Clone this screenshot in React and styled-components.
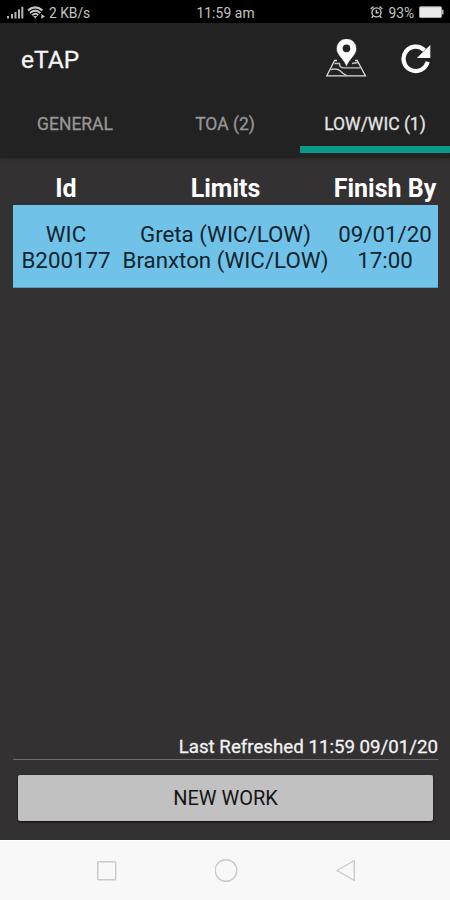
import React from 'react';
import styled, { createGlobalStyle } from 'styled-components';

const GlobalStyle = createGlobalStyle`
  * {
    box-sizing: border-box;
  }
  body {
    margin: 0;
    background: #343132;
    font-family: Roboto, "Liberation Sans", sans-serif;
  }
`;

const Screen = styled.div`
  display: flex;
  flex-direction: column;
  width: 450px;
  height: 900px;
  background: #343132;
  overflow: hidden;
`;

const StatusBar = styled.div`
  display: grid;
  grid-template-columns: 1fr auto 1fr;
  align-items: center;
  height: 23px;
  padding: 2px 6px 0 7px;
  background: #000;
  color: #c4c4c4;
  font-size: 13px;
  line-height: 20px;
  white-space: nowrap;
`;

const StatusGroup = styled.div`
  display: flex;
  align-items: center;
  justify-content: ${(props) => (props.$end ? 'flex-end' : 'flex-start')};
  gap: ${(props) => props.$gap}px;
`;

const StatusText = styled.span`
  font-size: 13.8px;
  letter-spacing: ${(props) => props.$spacing || 0}px;
`;

const Header = styled.header`
  height: 135px;
  background: #222;
  box-shadow: 0 1px 4px rgba(0, 0, 0, 0.25);
`;

const Toolbar = styled.div`
  display: flex;
  align-items: center;
  justify-content: space-between;
  height: 70px;
  padding: 2px 19px 0 21px;
`;

const Title = styled.h1`
  margin: 0;
  padding-top: 1px;
  color: #f5f5f5;
  font-size: 24.5px;
  font-weight: 400;
  line-height: 30px;
  -webkit-text-stroke: 0.3px #f5f5f5;
`;

const Actions = styled.div`
  display: flex;
  align-items: center;
  gap: 34px;
`;

const IconButton = styled.button`
  display: flex;
  padding: 0;
  border: none;
  background: none;
  cursor: pointer;
`;

const Tabs = styled.nav`
  display: grid;
  grid-template-columns: repeat(3, 1fr);
  height: 60px;
`;

const Tab = styled.button`
  padding: 8px 0 0;
  border: none;
  border-bottom: 7px solid ${(props) => (props.$active ? '#0a9888' : 'transparent')};
  background: none;
  color: ${(props) => (props.$active ? '#e4e4e4' : '#979797')};
  font-family: inherit;
  font-size: 17.5px;
  font-weight: 400;
  -webkit-text-stroke: 0.3px currentColor;
  cursor: pointer;
`;

const Content = styled.main`
  display: flex;
  flex: 1;
  flex-direction: column;
  padding: 16px 12px 0 13px;
`;

const Row = styled.div`
  display: grid;
  grid-template-columns: 106px 1fr 106px;
  text-align: center;
  white-space: nowrap;
`;

const HeadRow = styled(Row)`
  height: 31px;
  color: #fff;
  font-size: 25px;
  font-weight: 700;
  line-height: 30px;
`;

const WorkRow = styled(Row)`
  height: 83px;
  padding-top: 16px;
  border: solid #5f9cba;
  border-width: 0 0 1px;
  background: #70c2e9;
  color: #12242c;
  font-size: 22.3px;
  line-height: 26px;
`;

const Cell = styled.div`
  display: flex;
  flex-direction: column;
  align-items: center;
`;

const Refreshed = styled.div`
  height: 26px;
  margin-top: auto;
  border-bottom: 1px solid #6c6a6b;
  color: #f2f2f2;
  font-size: 18.7px;
  line-height: 26px;
  text-align: right;
  -webkit-text-stroke: 0.3px #f2f2f2;
`;

const NewWork = styled.button`
  height: 46px;
  margin: 15px 5px 19px;
  border: none;
  border-radius: 2px;
  background: #c1c1c1;
  box-shadow: 0 1px 2px rgba(0, 0, 0, 0.8);
  color: #151515;
  font-family: inherit;
  font-size: 20px;
  cursor: pointer;
`;

const NavBar = styled.footer`
  display: grid;
  grid-template-columns: 120px 1fr 120px;
  align-items: center;
  justify-items: center;
  height: 60px;
  padding: 0 44px 0 47px;
  border-top: 1px solid #fff;
  background: #f8f8f8;
`;

const NavIcon = styled.svg`
  width: 24px;
  height: 24px;
  fill: none;
  stroke: #c9c9c9;
  stroke-width: 1.4;
`;

const columns = ['Id', 'Limits', 'Finish By'];

const work = [
  ['WIC', 'B200177'],
  ['Greta (WIC/LOW)', 'Branxton (WIC/LOW)'],
  ['09/01/20', '17:00'],
];

const SignalIcon = () => (
  <svg width="17" height="13" viewBox="0 0 17 13" fill="#b4b4b4">
    <rect x="0" y="10" width="2" height="2.5" />
    <rect x="4" y="8" width="2" height="4.5" />
    <rect x="7.5" y="6" width="2" height="6.5" />
    <rect x="11" y="3.4" width="2" height="9.1" />
    <rect x="14.3" y="0.8" width="2" height="11.7" />
  </svg>
);

const WifiIcon = () => (
  <svg width="19" height="13" viewBox="0 0 19 13" fill="none" stroke="#c4c4c4">
    <path d="M1 4.3Q8.2-1.5 15.4 4.3" strokeWidth="2.2" />
    <path d="M3 6.9Q8.2 2.4 13.4 6.9" strokeWidth="2" />
    <path d="M5.2 9.2Q8.2 6.5 11.2 9.2" strokeWidth="1.9" />
    <path d="M6.2 10h4l-2 2.400z" fill="#c4c4c4" stroke="none" />
    <path d="M14.300 8v4.800l3.600-2.400z" fill="#c4c4c4" stroke="none" />
  </svg>
);

const AlarmIcon = () => (
  <svg width="13" height="13" viewBox="0 0 13 13" fill="none" stroke="#c4c4c4" strokeWidth="1.4">
    <circle cx="6.5" cy="6.4" r="4.5" />
    <path d="M6.3 3.700v3.100h2.400M.6 3L3.500.6M12.400 3L9.500.6M3.200 10l-1.600 1.900M9.800 10l1.600 1.900" />
  </svg>
);

const BatteryIcon = () => (
  <svg width="25" height="13" viewBox="0 0 25 13">
    <rect x="0.5" y="0.8" width="22" height="10.700" rx="1" fill="#e9e9e9" stroke="#aaa" />
    <path d="M23 3.800h1.500v4.800H23z" fill="#bbb" />
  </svg>
);

const MapPinIcon = () => (
  <svg width="42" height="40" viewBox="0 0 42 40">
    <path d="M12 21.500H9.600L1.800 36.800h38.600L32.200 21.500H30" fill="none" stroke="#ddd" strokeWidth="1.300" />
    <path
      d="M5.500 30.600q7-1.600 9.500 1.200t6.500 4.500M9.500 24.500h5q0 4.200 4.500 4.400h16.500M27 24.500l6-1"
      fill="none"
      stroke="#c4c4c4"
      strokeWidth="1.400"
    />
    <path
      d="M21.500-.5a10.200 10.200 0 0 0-10.200 10.200c0 6.400 7.200 10 10.200 18.300 3-8.300 10.200-11.900 10.200-18.300A10.200 10.200 0 0 0 21.500-.5z"
      fill="#fff"
      stroke="#222"
      strokeWidth="0.700"
    />
    <circle cx="21.500" cy="9.400" r="3.800" fill="#222" />
  </svg>
);

const RefreshIcon = () => (
  <svg width="30" height="30" viewBox="0 0 30 30">
    <path d="M26.600 17.800A12.200 12.200 0 1 1 23.500 6.300" fill="none" stroke="#fff" strokeWidth="4.300" />
    <path d="M29.300 1v13H15.800z" fill="#fff" />
  </svg>
);

const App = () => {
  return (
    <>
      <GlobalStyle />
      <Screen>
        <StatusBar>
          <StatusGroup $gap={3}>
            <SignalIcon />
            <WifiIcon />
            <StatusText>2 KB/s</StatusText>
          </StatusGroup>
          <StatusText $spacing={0.1}>11:59 am</StatusText>
          <StatusGroup $gap={5} $end>
            <AlarmIcon />
            <StatusText>93%</StatusText>
            <BatteryIcon />
          </StatusGroup>
        </StatusBar>
        <Header>
          <Toolbar>
            <Title>eTAP</Title>
            <Actions>
              <IconButton aria-label="Map">
                <MapPinIcon />
              </IconButton>
              <IconButton aria-label="Refresh">
                <RefreshIcon />
              </IconButton>
            </Actions>
          </Toolbar>
          <Tabs>
            <Tab>GENERAL</Tab>
            <Tab>TOA (2)</Tab>
            <Tab $active>LOW/WIC (1)</Tab>
          </Tabs>
        </Header>
        <Content>
          <HeadRow>
            {columns.map((name) => (
              <Cell key={name}>{name}</Cell>
            ))}
          </HeadRow>
          <WorkRow>
            {work.map((lines) => (
              <Cell key={lines[0]}>
                {lines.map((line) => (
                  <span key={line}>{line}</span>
                ))}
              </Cell>
            ))}
          </WorkRow>
          <Refreshed>Last Refreshed 11:59 09/01/20</Refreshed>
          <NewWork>NEW WORK</NewWork>
        </Content>
        <NavBar>
          <NavIcon viewBox="0 0 24 24">
            <rect x="2.700" y="2.700" width="18" height="18" rx="1" />
          </NavIcon>
          <NavIcon viewBox="0 0 24 24">
            <circle cx="11" cy="11.500" r="10.800" />
          </NavIcon>
          <NavIcon viewBox="0 0 24 24">
            <path d="M20.300 1.500v20L3 11.500z" strokeLinejoin="round" />
          </NavIcon>
        </NavBar>
      </Screen>
    </>
  );
};

export default App;
